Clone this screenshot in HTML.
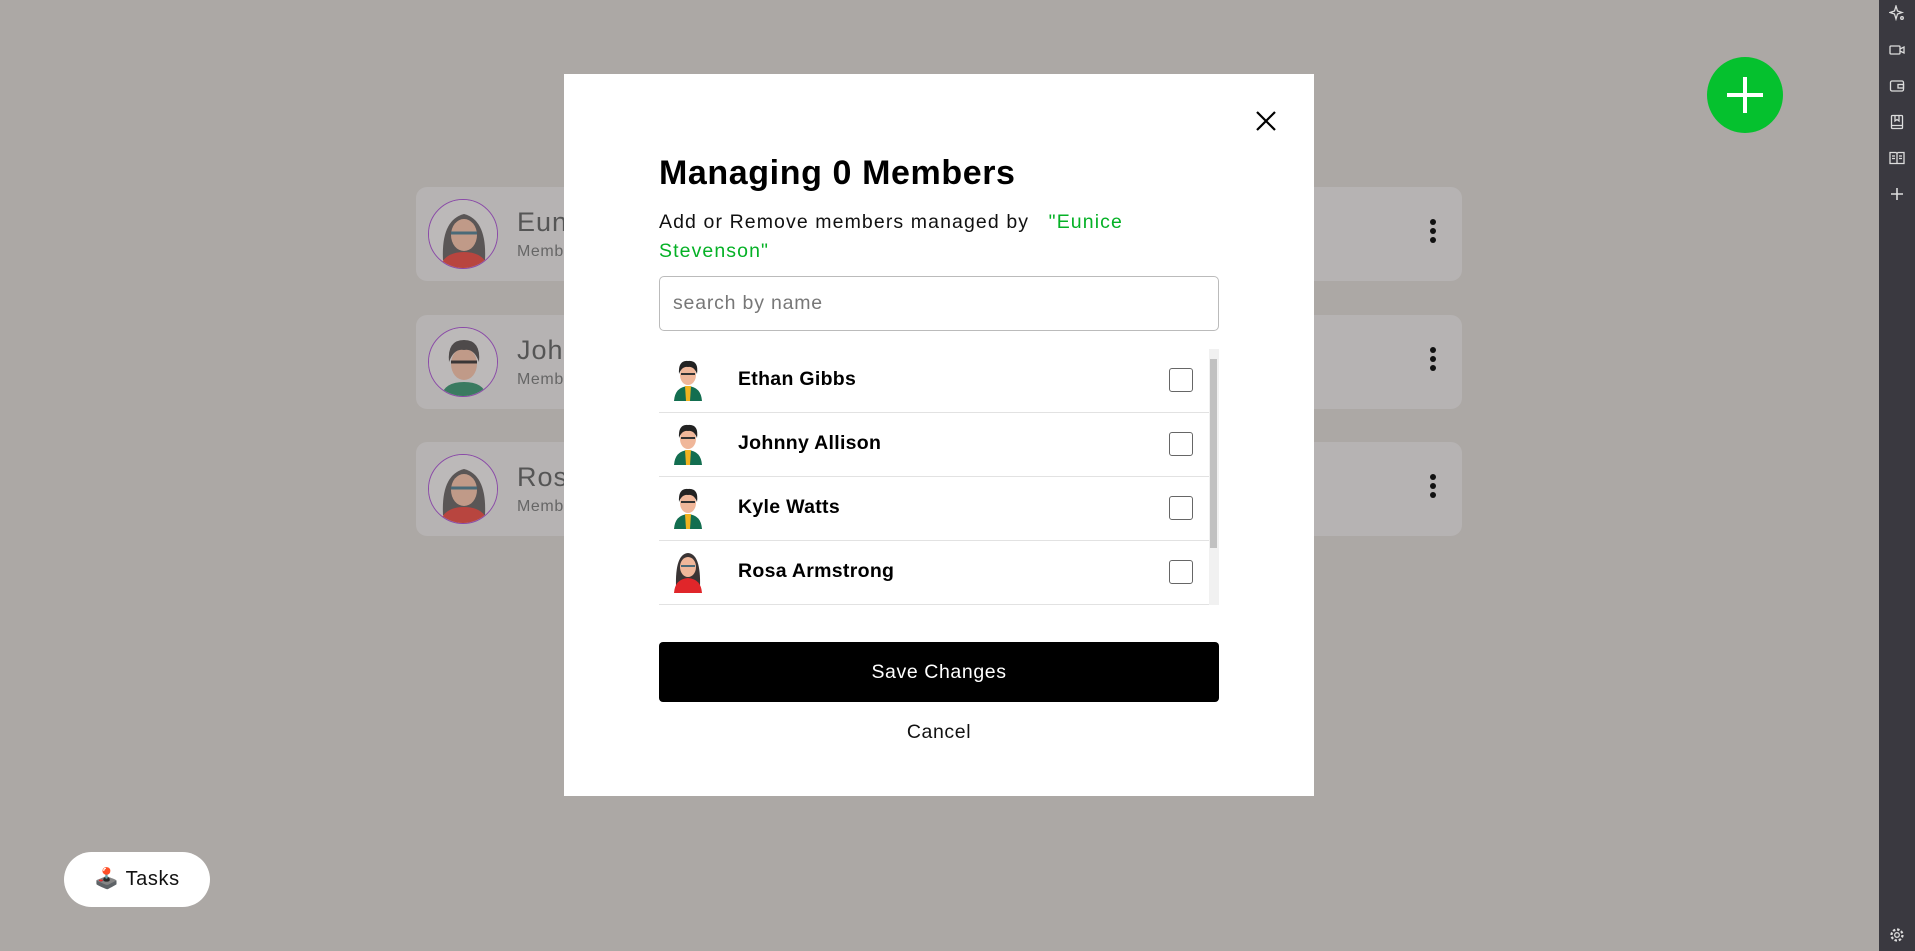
<!DOCTYPE html>
<html><head><meta charset="utf-8"><style>
*{box-sizing:border-box;margin:0;padding:0}
body{width:1915px;height:951px;overflow:hidden;background:#aca8a5;font-family:"Liberation Sans",sans-serif;position:relative}
.side{position:absolute;left:1879px;top:0;width:36px;height:951px;background:#3a3940}
.side svg{position:absolute;left:10px;width:16px;height:16px;fill:none;stroke:#ddd;stroke-width:1.3}
.card{position:absolute;left:416px;width:1046px;height:94px;background:#b6b3b3;border-radius:11px}
.card .nm{position:absolute;left:101px;top:20px;font-size:27px;color:#555;letter-spacing:1px}
.card .sub{position:absolute;left:101px;top:56px;font-size:16px;color:#666;letter-spacing:0.6px}
.dots{position:absolute;left:1014px;top:32px;width:6px}
.dots i{display:block;width:6px;height:6px;border-radius:50%;background:#111;margin-bottom:3px}
.cav{position:absolute;left:12px;top:12px;width:70px;height:70px;border-radius:50%;border:1.5px solid #8a4aa8;overflow:hidden}
.plus{position:absolute;left:1707px;top:57px;width:76px;height:76px;border-radius:50%;background:#05c12e}
.plus:before,.plus:after{content:"";position:absolute;background:#fff;left:36px;top:20px;width:4px;height:36px}
.plus:after{left:20px;top:36px;width:36px;height:4px}
.modal{position:absolute;left:564px;top:74px;width:750px;height:722px;background:#fff}
.x{position:absolute;left:692px;top:37px}
h1{position:absolute;left:95px;top:80px;font-size:34px;font-weight:700;color:#000;letter-spacing:0.6px}
.subt{position:absolute;left:95px;top:134px;font-size:19.5px;line-height:29px;color:#111;width:520px;letter-spacing:1.1px}
.subt span{color:#05b126}
.inp{position:absolute;left:95px;top:202px;width:560px;height:55px;border:1px solid #bbb;border-radius:5px;padding:0 13px;line-height:53px;font-size:19.5px;color:#777;letter-spacing:0.8px}
.list{position:absolute;left:95px;top:275px;width:560px;height:256px;overflow:hidden}
.row{position:relative;height:64px;border-bottom:1px solid #e2e2e2;width:550px}
.row .n{position:absolute;left:79px;top:19px;font-size:19.5px;font-weight:600;color:#000;letter-spacing:0.3px}
.row .cb{position:absolute;left:510px;top:19px;width:24px;height:24px;border:1.5px solid #666;border-radius:3px}
.row svg{position:absolute;left:13px;top:8px}
.sb{position:absolute;left:550px;top:0;width:10px;height:256px;background:#f1f1f1}
.sb div{position:absolute;left:1px;top:10px;width:7px;height:189px;background:#c1c1c1}
.save{position:absolute;left:95px;top:568px;width:560px;height:60px;background:#000;border-radius:4px;color:#fff;font-size:19.5px;text-align:center;line-height:60px;letter-spacing:0.6px}
.cancel{position:absolute;left:95px;top:647px;width:560px;text-align:center;font-size:19.5px;color:#111;letter-spacing:0.6px}
.tasks{position:absolute;left:64px;top:852px;width:146px;height:55px;border-radius:28px;background:#fff;font-size:20px;line-height:55px;text-align:center;color:#111;letter-spacing:0.6px}
</style></head><body>
<div class="side">
<svg style="top:5px" viewBox="0 0 16 16"><path d="M7 1 L8.5 6 L13 7.5 L8.5 9 L7 14 L5.5 9 L1 7.5 L5.5 6Z"/><circle cx="13" cy="13" r="1.3"/></svg>
<svg style="top:42px" viewBox="0 0 16 16"><rect x="1" y="4" width="10" height="8" rx="1"/><path d="M11 7 L15 5 V11 L11 9"/></svg>
<svg style="top:78px" viewBox="0 0 16 16"><rect x="1.5" y="3" width="13" height="10" rx="1.5"/><rect x="9" y="6.5" width="5.5" height="3.5"/></svg>
<svg style="top:114px" viewBox="0 0 16 16"><rect x="2.5" y="1.5" width="11" height="13" rx="1"/><path d="M6 1.5 V7 L8 5.5 L10 7 V1.5 M2.5 11.5 H13.5"/></svg>
<svg style="top:150px" viewBox="0 0 16 16"><path d="M1 2.5 H7 L8 3.5 L9 2.5 H15 V13.5 H1Z M8 3.5 V13.5 M3 6 H6 M3 8.5 H6 M10 6 H13 M10 8.5 H13"/></svg>
<svg style="top:186px" viewBox="0 0 16 16"><path d="M8 2 V14 M2 8 H14" stroke-width="1.6"/></svg>
<svg style="top:927px" viewBox="0 0 16 16"><circle cx="8" cy="8" r="2.3"/><circle cx="8" cy="8" r="5.5" stroke-dasharray="2.5 1.8" stroke-width="2.2"/></svg>
</div>
<div class="plus"></div>

<div class="card" style="top:187px"><div class="cav"><svg width="70" height="70" viewBox="0 0 70 70"><rect width="70" height="70" fill="#bcb9b9"/><path d="M14 60 Q12 20 35 14 Q58 20 56 60Z" fill="#5a5656"/><ellipse cx="35" cy="35" rx="13" ry="16" fill="#c09a88"/><path d="M10 70 Q14 52 35 52 Q56 52 60 70Z" fill="#b8453f"/><path d="M22 33 H48" stroke="#4a6a78" stroke-width="3"/></svg></div><div class="nm">Euni</div><div class="sub">Memb</div><div class="dots"><i></i><i></i><i></i></div></div>
<div class="card" style="top:315px"><div class="cav"><svg width="70" height="70" viewBox="0 0 70 70"><rect width="70" height="70" fill="#bcb9b9"/><ellipse cx="35" cy="36" rx="13" ry="16" fill="#c09a88"/><path d="M20 34 Q18 12 35 12 Q52 12 50 34 Q45 20 35 22 Q25 20 20 34Z" fill="#4e4a4a"/><path d="M12 70 Q14 54 35 54 Q56 54 58 70Z" fill="#3a7a60"/><path d="M22 34 H48" stroke="#3a3636" stroke-width="3"/></svg></div><div class="nm">John</div><div class="sub">Memb</div><div class="dots"><i></i><i></i><i></i></div></div>
<div class="card" style="top:442px"><div class="cav"><svg width="70" height="70" viewBox="0 0 70 70"><rect width="70" height="70" fill="#bcb9b9"/><path d="M14 60 Q12 20 35 14 Q58 20 56 60Z" fill="#5a5656"/><ellipse cx="35" cy="35" rx="13" ry="16" fill="#c09a88"/><path d="M10 70 Q14 52 35 52 Q56 52 60 70Z" fill="#b8453f"/><path d="M22 33 H48" stroke="#4a6a78" stroke-width="3"/></svg></div><div class="nm">Rose</div><div class="sub">Memb</div><div class="dots"><i></i><i></i><i></i></div></div>

<div class="modal">
<svg class="x" width="20" height="20" viewBox="0 0 20 20"><path d="M1 1 L19 19 M19 1 L1 19" stroke="#000" stroke-width="2.2"/></svg>
<h1>Managing 0 Members</h1>
<div class="subt">Add or Remove members managed by &nbsp;&nbsp;<span>"Eunice Stevenson"</span></div>
<div class="inp">search by name</div>
<div class="list">
<div class="row"><svg width="32" height="44" viewBox="0 0 32 44"><path d="M2 44 Q3 30 16 29 Q29 30 30 44Z" fill="#136e50"/><path d="M13 29 H19 L18 44 H14Z" fill="#f1b320"/><ellipse cx="16" cy="18" rx="8" ry="10" fill="#f0b79a"/><path d="M7 17 Q6 3 16 4 Q27 3 25 17 Q22 9 16 10 Q10 9 7 17Z" fill="#222"/><path d="M9 17 H23" stroke="#333" stroke-width="2"/></svg><div class="n">Ethan Gibbs</div><div class="cb"></div></div>
<div class="row"><svg width="32" height="44" viewBox="0 0 32 44"><path d="M2 44 Q3 30 16 29 Q29 30 30 44Z" fill="#136e50"/><path d="M13 29 H19 L18 44 H14Z" fill="#f1b320"/><ellipse cx="16" cy="18" rx="8" ry="10" fill="#f0b79a"/><path d="M7 17 Q6 3 16 4 Q27 3 25 17 Q22 9 16 10 Q10 9 7 17Z" fill="#222"/><path d="M9 17 H23" stroke="#333" stroke-width="2"/></svg><div class="n">Johnny Allison</div><div class="cb"></div></div>
<div class="row"><svg width="32" height="44" viewBox="0 0 32 44"><path d="M2 44 Q3 30 16 29 Q29 30 30 44Z" fill="#136e50"/><path d="M13 29 H19 L18 44 H14Z" fill="#f1b320"/><ellipse cx="16" cy="18" rx="8" ry="10" fill="#f0b79a"/><path d="M7 17 Q6 3 16 4 Q27 3 25 17 Q22 9 16 10 Q10 9 7 17Z" fill="#222"/><path d="M9 17 H23" stroke="#333" stroke-width="2"/></svg><div class="n">Kyle Watts</div><div class="cb"></div></div>
<div class="row"><svg width="32" height="44" viewBox="0 0 32 44"><path d="M4 38 Q3 5 16 4 Q29 5 28 38Z" fill="#3a3434"/><ellipse cx="16" cy="18" rx="8" ry="10" fill="#f0b79a"/><path d="M2 44 Q3 30 16 29 Q29 30 30 44Z" fill="#e0262a"/><path d="M9 17 H23" stroke="#4a6a78" stroke-width="2"/></svg><div class="n">Rosa Armstrong</div><div class="cb"></div></div>
<div class="sb"><div></div></div>
</div>
<div class="save">Save Changes</div>
<div class="cancel">Cancel</div>
</div>

<div class="tasks">🕹️ Tasks</div>
</body></html>
